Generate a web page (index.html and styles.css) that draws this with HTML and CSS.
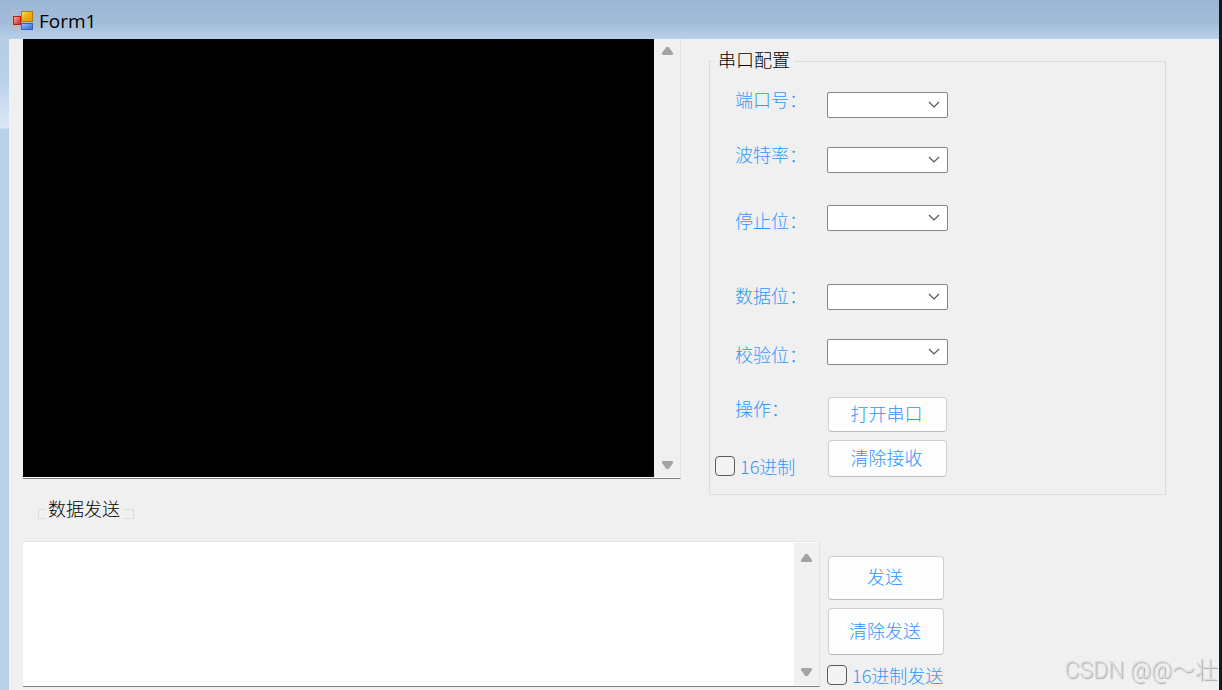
FILE: index.html
```html
<!DOCTYPE html>
<html lang="zh-CN">
  <head>
    <meta charset="UTF-8" />
    <meta name="viewport" content="width=device-width, initial-scale=1.0" />
    <title>Form1</title>
    <link rel="stylesheet" href="styles.css">
  </head>
  <body>

    <header class="titlebar">
      <svg class="app-icon" width="22" height="22" viewBox="0 0 22 22">
        <defs>
          <linearGradient id="red" x1="0" y1="0" x2="1" y2="1"><stop offset="0" stop-color="#f6b0a4"/><stop offset="1" stop-color="#c8241c"/></linearGradient>
          <linearGradient id="gold" x1="0" y1="0" x2="1" y2="1"><stop offset="0" stop-color="#fde98a"/><stop offset=".4" stop-color="#f0b414"/><stop offset="1" stop-color="#dc9400"/></linearGradient>
          <linearGradient id="blue" x1="0" y1="0" x2="1" y2="1"><stop offset="0" stop-color="#9cc4ff"/><stop offset="1" stop-color="#2c64d8"/></linearGradient>
        </defs>
        <path d="M9 .5H.5V20.5H9M4.5 15v5" fill="none" stroke="#bdbcc2"/>
        <rect x="1.5" y="6.5" width="7" height="8" fill="url(#red)" stroke="#c01c10"/>
        <rect x="9.5" y="1.5" width="11" height="10" fill="url(#gold)" stroke="#a87c10"/>
        <rect x="9.5" y="13.5" width="11" height="6" fill="url(#blue)" stroke="#3a62b4"/>
      </svg>
      <h1>Form1</h1>
    </header>

    <main class="client">
      <div class="top">
        <div class="left">
          <div class="textbox receive">
            <textarea aria-label="接收" readonly></textarea>
            <div class="scroll">
              <svg width="13" height="10" viewBox="0 0 13 10"><path d="M5 1.6Q6.500 0 8 1.600L12 7Q12.600 9 11 9H2Q.4 9 1 7Z"/></svg>
              <svg width="13" height="10" viewBox="0 0 13 10"><path d="M5 8.400Q6.500 10 8 8.400L12 3Q12.600 1 11 1H2Q.4 1 1 3Z"/></svg>
            </div>
          </div>
          <h2 class="send-title">数据发送</h2>
        </div>

        <fieldset class="config">
          <legend>串口配置</legend>
          <label for="port">端口号：</label>
          <select id="port"></select>
          <label for="baud">波特率：</label>
          <select id="baud"></select>
          <label for="stop" class="low">停止位：</label>
          <select id="stop"></select>
          <label for="data" class="mid">数据位：</label>
          <select id="data"></select>
          <label for="parity" class="low">校验位：</label>
          <select id="parity"></select>
          <span class="name mid">操作：</span>
          <button type="button">打开串口</button>
          <label class="check"><input type="checkbox">16进制</label>
          <button type="button">清除接收</button>
        </fieldset>
      </div>

      <div class="bottom">
        <div class="textbox send">
          <textarea aria-label="数据发送"></textarea>
          <div class="scroll">
            <svg width="13" height="10" viewBox="0 0 13 10"><path d="M5 1.6Q6.500 0 8 1.600L12 7Q12.600 9 11 9H2Q.4 9 1 7Z"/></svg>
            <svg width="13" height="10" viewBox="0 0 13 10"><path d="M5 8.400Q6.500 10 8 8.400L12 3Q12.600 1 11 1H2Q.4 1 1 3Z"/></svg>
          </div>
        </div>
        <div class="actions">
          <button type="button">发送</button>
          <button type="button">清除发送</button>
          <label class="check"><input type="checkbox">16进制发送</label>
        </div>
      </div>
    </main>

    <div class="watermark">CSDN @@～壮</div>

  </body>
</html>
```
FILE: styles.css
```css
* {
  box-sizing: border-box;
  margin: 0;
  padding: 0;
}
body {
  display: flex;
  flex-direction: column;
  min-height: 100vh;
  border-right: 3px solid #16191b;
  background: #f0f0f0;
  font-family: "Noto Sans CJK SC", sans-serif;
  font-size: 18px;
  font-weight: 300;
  line-height: 14px;
  overflow: hidden;
}
.titlebar {
  display: flex;
  align-items: center;
  gap: 5px;
  height: 39px;
  padding: 3px 0 0 12px;
  background: linear-gradient(#9bb6d4, #a3bdd9 60%, #b8d0ea);
}
.titlebar h1 {
  font-family: "Open Sans", sans-serif;
  font-size: 19px;
  font-weight: 400;
  line-height: 24px;
}
.client {
  flex: 1;
  padding-left: 14px;
  border-left: 9px solid #b9d1ea;
  border-image: linear-gradient(#b4cce6, #b9d1ea 40px, #dbe7f5 89px, #b9d1ea 90px) 0 0 0 9;
}
.top {
  display: grid;
  grid-template-columns: 658fr 457fr;
  gap: 28px;
  padding-right: 53px;
  height: 502px;
}
.textbox {
  display: flex;
  border-right: 1px solid #e3e3e3;
  border-bottom: 1px solid #808080;
  background: #fff;
}
.textbox textarea {
  flex: 1;
  min-width: 0;
  border: none;
  outline: none;
  resize: none;
  font: inherit;
  background: transparent;
}
.scroll {
  display: flex;
  flex-direction: column;
  justify-content: space-between;
  align-items: center;
  width: 26px;
  margin-bottom: 1px;
  padding: 7px 0;
  background: #f0f0f0;
}
.scroll path {
  fill: #a3a3a3;
}
.receive {
  height: 440px;
}
.receive textarea {
  margin-bottom: 1px;
  background: #000;
  color: #fff;
}
.send-title {
  display: flex;
  align-items: flex-start;
  height: 18px;
  margin: 22px 0 0 15px;
  font-size: 18px;
  font-weight: 300;
}
.send-title::before,
.send-title::after {
  content: "";
  align-self: flex-end;
  width: 7px;
  height: 8px;
  margin-right: 2px;
  border: 1px solid #dcdcdc;
}
.send-title::before {
  border-right: none;
}
.send-title::after {
  width: 10px;
  margin: 0 0 0 3px;
  border-left: none;
}
.config {
  display: grid;
  grid-template-columns: 112px 121px;
  grid-template-rows: 55px 58px 79px 55px 58px 43px 37px;
  align-content: start;
  align-items: start;
  min-width: 0;
  margin: 12px 0 46px;
  padding: 21px 5px 0;
  border: 1px solid #dcdcdc;
}
.config legend {
  padding: 0 4px 4px 3px;
  line-height: 16px;
}
.config label,
.config .name {
  padding-left: 20px;
  color: #2e96ff;
}
.config .low {
  padding-top: 8px;
}
.config .mid {
  padding-top: 4px;
}
select {
  appearance: none;
  width: 121px;
  height: 26px;
  border: 1px solid #868686;
  border-radius: 2px;
  background: #fff url("data:image/svg+xml,%3Csvg xmlns='http://www.w3.org/2000/svg' width='12' height='8'%3E%3Cpath d='M1 1l5 5 5-5' fill='none' stroke='%23555' stroke-width='1.2'/%3E%3C/svg%3E") no-repeat right 7px center;
}
button {
  border: 1px solid #d0d0d0;
  border-bottom-color: #bababa;
  border-radius: 4px;
  background: #fdfdfd;
  color: #2e96ff;
  font: inherit;
  padding: 0 2px 4px 0;
}
.config button {
  justify-self: center;
  width: 119px;
  height: 35px;
}
.config button:last-child {
  height: 37px;
}
.check {
  display: flex;
  align-items: center;
  gap: 5px;
  color: #2e96ff;
  white-space: nowrap;
}
.config .check {
  align-self: end;
  padding: 0 0 1px;
}
.check input {
  appearance: none;
  width: 20px;
  height: 20px;
  border: 1px solid #5c5c5c;
  border-radius: 4px;
  background: #f3f3f3;
}
.check input:checked {
  background: #2e96ff;
}
.bottom {
  display: flex;
  gap: 7px;
}
.send {
  flex: 1;
  height: 146px;
  border-top: 1px solid #e6e6e6;
}
.send .scroll {
  width: 25px;
  margin-top: 1px;
  padding: 10px 0 8px;
}
.actions {
  display: flex;
  flex-direction: column;
  width: 392px;
  padding-top: 15px;
}
.actions button {
  width: 116px;
  height: 44px;
  margin: 0 0 8px 1px;
}
.actions button + button {
  height: 47px;
}
.actions .check {
  margin-top: 2px;
}
.watermark {
  position: fixed;
  right: 4px;
  bottom: 7px;
  font-family: Roboto, "Noto Sans CJK SC", sans-serif;
  font-size: 23px;
  line-height: 24px;
  color: #dadada;
  text-shadow: 1px 1px 1px #a8a8a8;
}
```
